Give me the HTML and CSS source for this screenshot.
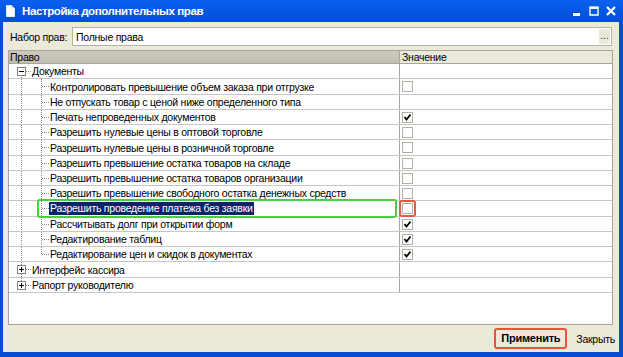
FILE: index.html
```html
<!DOCTYPE html>
<html lang="ru">

<head>
    <meta charset="UTF-8">
    <title>Настройка дополнительных прав</title>
    <link rel="stylesheet" href="styles.css">
</head>

<body>
    <div class="window">
        <div class="titlebar">
            <svg class="app-icon" width="9" height="12" viewBox="0 0 9 12">
                <path d="M0.5 0.5 H5.5 L8.5 3.5 V11.5 H0.5 Z" fill="#fff" stroke="#dfe8ff"/>
                <path d="M5.5 0.5 V3.5 H8.5" fill="#c8d4f0"/>
            </svg>
            <span class="title">Настройка дополнительных прав</span>
            <div class="caption-buttons">
                <svg width="9" height="10" viewBox="0 0 9 10"><rect x="0" y="7" width="7" height="3" fill="#fff"/></svg>
                <svg width="10" height="10" viewBox="0 0 10 10"><path d="M1 1.5 H9 V9 H1 Z" fill="none" stroke="#fff" stroke-width="1.4"/><rect x="0.5" y="0.5" width="9" height="2.5" fill="#fff"/></svg>
                <svg width="10" height="10" viewBox="0 0 10 10"><path d="M1 1 L9 9 M9 1 L1 9" stroke="#fff" stroke-width="2.2"/></svg>
            </div>
        </div>

        <div class="client">
            <div class="set-row">
                <label class="set-label">Набор прав:</label>
                <div class="field">
                    <span>Полные права</span>
                    <span class="dots">...</span>
                </div>
            </div>

            <div class="grid">
                <div class="grid-head">
                    <div class="head-name">Право</div>
                    <div class="head-value">Значение</div>
                </div>

                <div class="row">
                    <div class="name"><span class="g1 group-first"><svg class="box" width="9" height="9" viewBox="0 0 9 9"><rect x="0.5" y="0.5" width="8" height="8" fill="#fff" stroke="#808080"/><path d="M2 4.5 H7" stroke="#000"/></svg></span><span class="text">Документы</span></div>
                    <div class="value"></div>
                </div>
                <div class="row">
                    <div class="name"><span class="g1 pass"></span><span class="g2"></span><span class="text">Контролировать превышение объем заказа при отгрузке</span></div>
                    <div class="value"><span class="cb"></span></div>
                </div>
                <div class="row">
                    <div class="name"><span class="g1 pass"></span><span class="g2"></span><span class="text">Не отпускать товар с ценой ниже определенного типа</span></div>
                    <div class="value"></div>
                </div>
                <div class="row">
                    <div class="name"><span class="g1 pass"></span><span class="g2"></span><span class="text">Печать непроведенных документов</span></div>
                    <div class="value"><span class="cb checked"><svg width="9" height="9" viewBox="0 0 9 9"><path d="M1.5 4 L3.5 6.5 L7.5 1.5" fill="none" stroke="#000" stroke-width="1.8"/></svg></span></div>
                </div>
                <div class="row">
                    <div class="name"><span class="g1 pass"></span><span class="g2"></span><span class="text">Разрешить нулевые цены в оптовой торговле</span></div>
                    <div class="value"><span class="cb"></span></div>
                </div>
                <div class="row">
                    <div class="name"><span class="g1 pass"></span><span class="g2"></span><span class="text">Разрешить нулевые цены в розничной торговле</span></div>
                    <div class="value"><span class="cb"></span></div>
                </div>
                <div class="row">
                    <div class="name"><span class="g1 pass"></span><span class="g2"></span><span class="text">Разрешить превышение остатка товаров на складе</span></div>
                    <div class="value"><span class="cb"></span></div>
                </div>
                <div class="row">
                    <div class="name"><span class="g1 pass"></span><span class="g2"></span><span class="text">Разрешить превышение остатка товаров организации</span></div>
                    <div class="value"><span class="cb"></span></div>
                </div>
                <div class="row">
                    <div class="name"><span class="g1 pass"></span><span class="g2"></span><span class="text">Разрешить превышение свободного остатка денежных средств</span></div>
                    <div class="value"><span class="cb"></span></div>
                </div>
                <div class="row selected">
                    <div class="name"><span class="g1 pass"></span><span class="g2"></span><span class="text sel">Разрешить проведение платежа без заявки</span></div>
                    <div class="value"><span class="cb marked"></span></div>
                </div>
                <div class="row">
                    <div class="name"><span class="g1 pass"></span><span class="g2"></span><span class="text">Рассчитывать долг при открытии форм</span></div>
                    <div class="value"><span class="cb checked"><svg width="9" height="9" viewBox="0 0 9 9"><path d="M1.5 4 L3.5 6.5 L7.5 1.5" fill="none" stroke="#000" stroke-width="1.8"/></svg></span></div>
                </div>
                <div class="row">
                    <div class="name"><span class="g1 pass"></span><span class="g2"></span><span class="text">Редактирование таблиц</span></div>
                    <div class="value"><span class="cb checked"><svg width="9" height="9" viewBox="0 0 9 9"><path d="M1.5 4 L3.5 6.5 L7.5 1.5" fill="none" stroke="#000" stroke-width="1.8"/></svg></span></div>
                </div>
                <div class="row">
                    <div class="name"><span class="g1 pass"></span><span class="g2 last"></span><span class="text">Редактирование цен и скидок в документах</span></div>
                    <div class="value"><span class="cb checked"><svg width="9" height="9" viewBox="0 0 9 9"><path d="M1.5 4 L3.5 6.5 L7.5 1.5" fill="none" stroke="#000" stroke-width="1.8"/></svg></span></div>
                </div>
                <div class="row">
                    <div class="name"><span class="g1 group-mid"><svg class="box" width="9" height="9" viewBox="0 0 9 9"><rect x="0.5" y="0.5" width="8" height="8" fill="#fff" stroke="#808080"/><path d="M2 4.5 H7 M4.5 2 V7" stroke="#000"/></svg></span><span class="text">Интерфейс кассира</span></div>
                    <div class="value"></div>
                </div>
                <div class="row">
                    <div class="name"><span class="g1 group-last"><svg class="box" width="9" height="9" viewBox="0 0 9 9"><rect x="0.5" y="0.5" width="8" height="8" fill="#fff" stroke="#808080"/><path d="M2 4.5 H7 M4.5 2 V7" stroke="#000"/></svg></span><span class="text">Рапорт руководителю</span></div>
                    <div class="value"></div>
                </div>
            </div>

            <div class="footer">
                <span class="btn btn-apply">Применить</span>
                <span class="btn">Закрыть</span>
            </div>
        </div>
    </div>
</body>

</html>
```

FILE: styles.css
```css
body {
    margin: 0;
    font-family: "Liberation Sans", Arial, sans-serif;
    font-size: 10.5px;
    letter-spacing: -0.25px;
    color: #000;
}

.window {
    width: 623px;
    height: 357px;
    display: flex;
    flex-direction: column;
    background: #0a4bd3;
}

/* title bar */
.titlebar {
    height: 22px;
    flex: none;
    display: flex;
    align-items: center;
    padding: 0 7px 0 6px;
    background: linear-gradient(#0b61ee, #0457e3 50%, #034fd6);
    color: #fff;
}

.app-icon {
    margin-right: 7px;
}

.title {
    font-weight: bold;
    font-size: 11.5px;
    letter-spacing: -0.4px;
}

.caption-buttons {
    margin-left: auto;
    display: flex;
    align-items: center;
    gap: 7px;
}

/* window body */
.client {
    flex: 1;
    display: flex;
    flex-direction: column;
    margin: 0 4px 5px 3px;
    padding: 5px 6px 0 5px;
    background: #ece9d8;
}

.set-row {
    height: 19px;
    display: flex;
    align-items: center;
}

.set-label {
    width: 62px;
    margin-left: 2px;
    white-space: nowrap;
}

.field {
    flex: 1;
    height: 17px;
    margin-right: 1px;
    display: flex;
    align-items: center;
    padding-left: 3px;
    border: 1px solid #b5b2a6;
    background: #fff;
}

.dots {
    margin-left: auto;
    margin-right: 1px;
    width: 11px;
    height: 15px;
    line-height: 13px;
    text-align: center;
    font-size: 10px;
    letter-spacing: 0;
    background: #ece9d8;
    color: #333;
}

/* grid */
.grid {
    flex: 1;
    margin-top: 4px;
    display: flex;
    flex-direction: column;
    border: 1px solid #a8a59a;
    background: #fff;
}

.grid-head {
    height: 12px;
    display: flex;
    line-height: 12px;
    border-bottom: 1px solid #a8a59a;
}

.head-name {
    width: 389px;
    padding-left: 1px;
    border-right: 1px solid #a8a59a;
    background: linear-gradient(#cdc9bd, #c2beb1);
}

.head-value {
    flex: 1;
    padding-left: 2px;
    background: #ebe8dc;
}

.row {
    height: 14px;
    display: flex;
    border-bottom: 1px solid #c6c6c6;
}

.row:nth-child(4n+3) {
    height: 15px;
}

.name {
    width: 390px;
    display: flex;
    align-items: center;
    border-right: 1px solid #a8a59a;
}

.value {
    flex: 1;
    display: flex;
    align-items: center;
    padding-left: 1px;
}

.text {
    line-height: 14px;
    white-space: nowrap;
}

/* tree lines */
.g1,
.g2 {
    flex: none;
    height: 100%;
    display: flex;
    align-items: center;
    background-repeat: no-repeat;
}

.g1 {
    width: 23px;
}

.g1 .box {
    margin-left: 8px;
}

.g1.pass {
    background-image: repeating-linear-gradient(to bottom, #858585 0 1px, transparent 1px 2px);
    background-size: 1px 100%;
    background-position: 12px 0;
}

.group-first,
.group-mid,
.group-last {
    background-image:
        repeating-linear-gradient(to right, #858585 0 1px, transparent 1px 2px),
        repeating-linear-gradient(to bottom, #858585 0 1px, transparent 1px 2px);
    background-size: 6px 1px, 1px 50%;
    background-position: 17px 50%, 12px 100%;
}

.group-mid {
    background-size: 6px 1px, 1px 100%;
    background-position: 17px 50%, 12px 0;
}

.group-last {
    background-position: 17px 50%, 12px 0;
}

.g2 {
    width: 18px;
    background-image:
        repeating-linear-gradient(to right, #858585 0 1px, transparent 1px 2px),
        repeating-linear-gradient(to bottom, #858585 0 1px, transparent 1px 2px);
    background-size: 8px 1px, 1px 100%;
    background-position: 10px 50%, 9px 0;
}

.g2.last {
    background-size: 8px 1px, 1px 50%;
}

.text.sel {
    margin-left: -1px;
    padding: 0 1px;
    line-height: 13px;
    background: #0a246a;
    color: #fff;
}

/* highlighted row and marked checkbox */
.selected {
    position: relative;
}

.selected::after {
    content: "";
    position: absolute;
    top: -2px;
    bottom: -2px;
    left: 28px;
    width: 356px;
    border: 2px solid #4fcb3f;
    border-radius: 3px;
}

.cb {
    position: relative;
    width: 11px;
    height: 11px;
    margin-left: 1px;
    box-sizing: border-box;
    display: flex;
    align-items: center;
    justify-content: center;
    border: 1px solid #b3b0a4;
    background: #fff;
}

.cb.marked::after {
    content: "";
    position: absolute;
    top: -4px;
    left: -4px;
    right: -4px;
    bottom: -4px;
    border: 2px solid #e55a3e;
    border-radius: 3px;
}

/* buttons */
.footer {
    height: 27px;
    flex: none;
    display: flex;
    align-items: center;
    justify-content: flex-end;
    gap: 7px;
    margin-right: -4px;
}

.btn {
    padding: 0 2px;
}

.btn-apply {
    height: 17px;
    line-height: 17px;
    padding: 0 5px;
    font-weight: bold;
    font-size: 11px;
    border: 2px solid #e2553b;
    border-radius: 3px;
}
```
